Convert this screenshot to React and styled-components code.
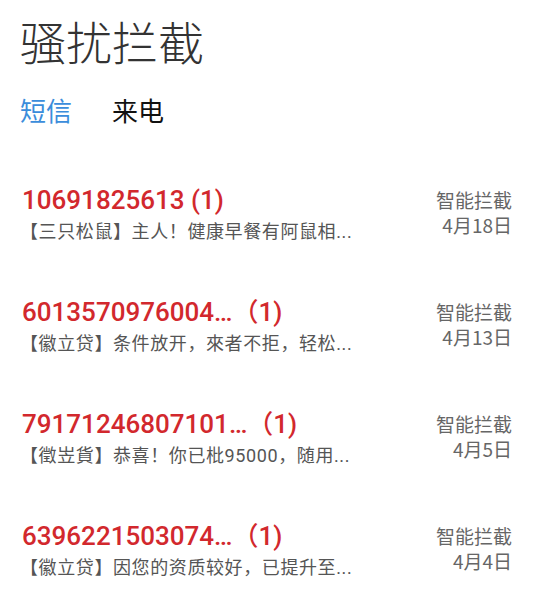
import React from 'react';
import styled, { createGlobalStyle } from 'styled-components';

const GlobalStyle = createGlobalStyle`
  body {
    margin: 0;
    background: #ffffff;
    font-family: Roboto, "Noto Sans CJK SC", sans-serif;
  }
`;

const Page = styled.div`
  width: 549px;
  height: 614px;
  overflow: hidden;
  background: #fff;
`;

const Title = styled.h1`
  margin: 0;
  padding: 12px 0 0 20px;
  font-family: "Noto Sans CJK SC", sans-serif;
  font-size: 46px;
  font-weight: 300;
  line-height: 56px;
  color: #333;
`;

const Tabs = styled.div`
  display: flex;
  gap: 40px;
  padding: 24px 0 0 20px;
`;

const Tab = styled.div`
  font-family: "Noto Sans CJK SC", sans-serif;
  font-size: 26px;
  line-height: 36px;
  color: ${(p) => (p.active ? '#3b8ddb' : '#111')};
`;

const List = styled.div`
  display: flex;
  flex-direction: column;
  padding-top: 56px;
`;

const Row = styled.div`
  display: flex;
  justify-content: space-between;
  align-items: flex-start;
  height: 112px;
  padding: 0 37px 0 22px;
`;

const Main = styled.div`
  display: flex;
  flex-direction: column;
`;

const Sender = styled.div`
  font-family: Roboto, "Noto Sans CJK SC", sans-serif;
  font-size: 26px;
  font-weight: 500;
  line-height: 32px;
  color: #d2282d;
`;

const Preview = styled.div`
  font-family: Roboto, "Noto Sans CJK SC", sans-serif;
  font-size: 18px;
  line-height: 26px;
  color: #555;
  margin: 3px 0 0 -2px;
  letter-spacing: 0.6px;
`;

const Side = styled.div`
  display: flex;
  flex-direction: column;
  align-items: flex-end;
  font-family: "Noto Sans CJK SC", sans-serif;
  font-size: 19px;
  line-height: 25px;
  color: #666;
  padding-top: 3px;
`;

const items = [
  { from: '10691825613 (1)', text: '【三只松鼠】主人！健康早餐有阿鼠相...', date: '4月18日' },
  { from: '6013570976004…（1)', text: '【徽立贷】条件放开，來者不拒，轻松...', date: '4月13日' },
  { from: '79171246807101…（1)', text: '【徵岦貨】恭喜！你已枇95000，随用...', date: '4月5日' },
  { from: '6396221503074…（1)', text: '【徽立贷】因您的资质较好，已提升至...', date: '4月4日' },
];

export default function App() {
  return (
    <Page>
      <GlobalStyle />
      <Title>骚扰拦截</Title>
      <Tabs>
        <Tab active>短信</Tab>
        <Tab>来电</Tab>
      </Tabs>
      <List>
        {items.map((it) => (
          <Row key={it.from}>
            <Main>
              <Sender>{it.from}</Sender>
              <Preview>{it.text}</Preview>
            </Main>
            <Side>
              <span>智能拦截</span>
              <span>{it.date}</span>
            </Side>
          </Row>
        ))}
      </List>
    </Page>
  );
}
